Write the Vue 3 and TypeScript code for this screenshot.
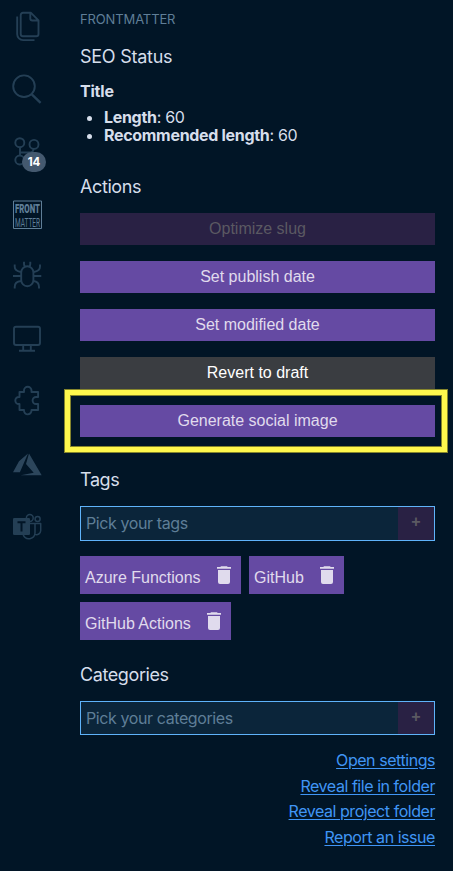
<script setup lang="ts">
import { ref } from 'vue'

interface Action {
  label: string
  kind: 'primary' | 'secondary'
  disabled?: boolean
  highlighted?: boolean
}

const actions: Action[] = [
  { label: 'Optimize slug', kind: 'primary', disabled: true },
  { label: 'Set publish date', kind: 'primary' },
  { label: 'Set modified date', kind: 'primary' },
  { label: 'Revert to draft', kind: 'secondary' },
  { label: 'Generate social image', kind: 'primary', highlighted: true },
]

const tags = ref<string[]>(['Azure Functions', 'GitHub', 'GitHub Actions'])
const links: string[] = ['Open settings', 'Reveal file in folder', 'Reveal project folder', 'Report an issue']

function removeTag(tag: string): void {
  tags.value = tags.value.filter((t) => t !== tag)
}
</script>

<template>
  <div class="workbench">
    <nav class="rail">
      <svg class="icon" viewBox="0 0 32 32">
        <path d="M20 2.800H12a2.300 2.300 0 0 0-2.300 2.300v18.800a2.300 2.300 0 0 0 2.300 2.300h13.200a2.300 2.300 0 0 0 2.300-2.300V10.300zM19.300 2.800v5.700a2 2 0 0 0 2 2h6.200M6.200 6.500v17.800a5.800 5.800 0 0 0 5.800 5.800h11.500" />
      </svg>
      <svg class="icon" viewBox="0 0 32 32">
        <circle cx="13" cy="13.200" r="10.800" />
        <path class="heavy" d="M20.800 21.300l8.800 8.600" />
      </svg>
      <div class="with-badge">
        <svg class="icon" viewBox="0 0 32 32">
          <circle cx="8.800" cy="7.700" r="4.500" />
          <circle cx="23" cy="9.400" r="4.500" />
          <circle cx="8.800" cy="25" r="4.500" />
          <path d="M9 12.500v8M9 17.500h9q4.500 0 4.500-3.500" />
        </svg>
        <span class="badge">14</span>
      </div>
      <svg class="icon brand" viewBox="0 0 32 32">
        <rect x="2.500" y="3" width="28" height="27.500" />
        <text x="4" y="14.500" class="front" textLength="25" lengthAdjust="spacingAndGlyphs">FRONT</text>
        <text x="4" y="28.500" class="matter" textLength="25" lengthAdjust="spacingAndGlyphs">MATTER</text>
      </svg>
      <svg class="icon" viewBox="0 0 32 32">
        <rect x="10.200" y="6.300" width="12.200" height="19.900" rx="6.100" />
        <path d="M13 1.800v2.200q0 1.500 1 2.500M19.300 1.800v2.200q0 1.500-1 2.500M3.700 4.500v2.300q0 4.200 6.200 5.200M29 4.500v2.300q0 4.200-6.200 5.200M2 16h8M22.500 16h7.800M10 21q-6.300.5-6.300 6v1.500M22.500 21q5.500.5 5.500 6v1.500" />
      </svg>
      <svg class="icon" viewBox="0 0 32 32">
        <rect x="3" y="3.700" width="26" height="18.300" rx="2" />
        <path d="M12.200 22v5.500M19.800 22v5.500M8 27.700h16" />
      </svg>
      <svg class="icon" viewBox="0 0 32 32">
        <path d="M8.500 7h4.500v-1.500a3.500 3.500 0 0 1 7.500 0v1.500h6.600v5h-2a3.500 3.500 0 0 0 0 7h2v6h-6.600v.6a3.500 3.500 0 0 1-7.500 0v-.6H8.500v-6H7.800a3.500 3.500 0 0 1 0-7h.7z" />
      </svg>
      <svg class="icon filled" viewBox="0 0 32 32">
        <path d="M17 5.500L8.900 24.300H2L8 13.300zM18 5.500l12.700 21.800h-21l13-2.500L15 15.900z" />
      </svg>
      <svg class="icon teams" viewBox="0 0 32 32">
        <circle cx="18.800" cy="8" r="3.400" />
        <circle cx="26.600" cy="9" r="2.500" />
        <path d="M19 13.500h5v9.300a6.100 6.100 0 0 1-11.800 2M24 13.500h5.700v7.200a4.200 4.200 0 0 1-5.700 3.700" />
        <rect class="tile" x="2" y="8" width="17" height="17" rx="1.300" />
        <path class="letter" d="M6.500 12.300h8M10.500 12.300v9.200" />
      </svg>
    </nav>

    <main class="panel">
      <header class="panel-title">FRONTMATTER</header>

      <section class="seo">
        <h3 class="seo-heading">SEO Status</h3>
        <h4>Title</h4>
        <ul>
          <li><strong>Length</strong>: 60</li>
          <li><strong>Recommended length</strong>: 60</li>
        </ul>
      </section>

      <section class="actions">
        <h3>Actions</h3>
        <div class="action-list">
          <div v-for="a in actions" :key="a.label" class="action">
            <button :class="a.kind" :disabled="a.disabled">{{ a.label }}</button>
            <span v-if="a.highlighted" class="highlight"></span>
          </div>
        </div>
      </section>

      <section class="tags">
        <h3>Tags</h3>
        <div class="picker">
          <input type="text" placeholder="Pick your tags" />
          <button disabled>+</button>
        </div>
        <div class="chips">
          <button v-for="tag in tags" :key="tag" class="chip" @click="removeTag(tag)">
            <span>{{ tag }}</span>
            <svg viewBox="0 0 14 18">
              <path d="M4 .3h6l.7.7H14v1.700H0V1h3.300zM1 4h12v12a2 2 0 0 1-2 2H3a2 2 0 0 1-2-2z" />
            </svg>
          </button>
        </div>
      </section>

      <section class="categories">
        <h3>Categories</h3>
        <div class="picker short">
          <input type="text" placeholder="Pick your categories" />
          <button disabled>+</button>
        </div>
      </section>

      <footer class="links">
        <a v-for="link in links" :key="link" href="#">{{ link }}</a>
      </footer>
    </main>
  </div>
</template>

<style>
body {
  background: #011526;
}
</style>

<style scoped>
.workbench {
  display: flex;
  box-sizing: border-box;
  width: 453px;
  height: 871px;
  overflow: hidden;
  background: #011526;
  color: #d6deeb;
  font: 16px/18px Inter, sans-serif;
}

.rail {
  display: flex;
  flex-direction: column;
  flex: none;
  gap: 30.5px;
  width: 69px;
  box-sizing: border-box;
  padding: 10px 0 0 11px;
}

.icon {
  display: block;
  flex: none;
  width: 32px;
  height: 32px;
  overflow: visible;
  fill: none;
  stroke: #243f55;
  stroke-width: 1.9;
  stroke-linejoin: round;
}

.heavy {
  stroke-width: 2.4;
}

.filled {
  fill: #2c465c;
  stroke: none;
}

.with-badge {
  position: relative;
  height: 32px;
}

.badge {
  position: absolute;
  left: 11px;
  top: 17px;
  width: 24px;
  height: 20px;
  border-radius: 10px;
  background: #44596f;
  color: #fff;
  font-size: 11.5px;
  font-weight: 700;
  line-height: 20px;
  text-align: center;
}

.brand {
  stroke: #5f7e97;
  stroke-width: 1;
}

.brand text {
  fill: #5f7e97;
  stroke: none;
  font-family: Roboto, sans-serif;
  font-size: 12px;
}

.brand .front {
  font-weight: 900;
}

.teams {
  stroke-width: 1.5;
}

.teams .tile {
  fill: #243f55;
  stroke: none;
}

.teams .letter {
  stroke: #011526;
  stroke-width: 2;
}

.panel {
  flex: none;
  width: 355px;
  margin-left: 11px;
}

.panel-title {
  height: 39px;
  line-height: 39px;
  font-size: 13px;
  letter-spacing: -0.13px;
  color: #5f7e97;
}

h3 {
  margin: 0;
  font-size: 18px;
  line-height: 24px;
  font-weight: 400;
  letter-spacing: -0.4px;
}

.seo-heading {
  letter-spacing: -0.25px;
}

.seo {
  padding-top: 6px;
}

h4 {
  margin: 12px 0 0;
  font-size: 16px;
  line-height: 20px;
  font-weight: 700;
  letter-spacing: -0.2px;
}

ul {
  margin: 7px 0 0;
  padding-left: 24px;
  font-size: 16px;
  letter-spacing: -0.31px;
}

.actions {
  padding-top: 31px;
}

.action-list {
  display: flex;
  flex-direction: column;
  gap: 16px;
  margin-top: 14px;
}

.action {
  position: relative;
}

button {
  border: 0;
  border-radius: 0;
  padding: 0;
  font: 16px/30px "Liberation Sans", Arial, sans-serif;
}

.action button {
  display: block;
  width: 100%;
  height: 32px;
}

.primary,
.chip {
  background: #654aa3;
  color: #e0dbed;
}

.primary:disabled,
.picker button {
  background: #292144;
  color: #5b5962;
}

.secondary {
  background: #3a3d41;
  color: #fff;
}

.highlight {
  position: absolute;
  inset: -15px -12px -15px -15px;
  border: 5px solid #fff84d;
  outline: 1px solid #85852c;
  box-shadow: inset 0 0 0 1px #85852c;
}

.tags {
  padding-top: 31px;
}

.picker {
  display: flex;
  box-sizing: border-box;
  height: 35px;
  margin-top: 14px;
  border: 1px solid #5fb3fa;
  background: #0b253a;
}

.picker.short {
  height: 34px;
}

.picker input {
  flex: 1;
  min-width: 0;
  border: 0;
  padding: 0 5px 1px;
  background: none;
  outline: none;
  color: #d6deeb;
  font: 16px Inter, sans-serif;
  letter-spacing: -0.4px;
}

.picker.short input {
  padding-bottom: 0;
}

.picker input::placeholder {
  color: #5f7e97;
  opacity: 1;
}

.picker button {
  width: 36px;
  padding-bottom: 3px;
  font-weight: 700;
}

.chips {
  display: flex;
  flex-wrap: wrap;
  gap: 8px;
  margin-top: 15px;
}

.chip {
  display: flex;
  align-items: center;
  height: 38px;
  padding: 0 10px 0 5px;
  gap: 16.4px;
}

.chip span {
  padding-top: 5px;
}

.chip svg {
  width: 14px;
  height: 18px;
  fill: #e0dbed;
}

.categories {
  padding-top: 23px;
}

.links {
  display: flex;
  flex-direction: column;
  align-items: flex-end;
  margin-top: 13px;
}

.links a {
  color: #4095f5;
  font-size: 16px;
  line-height: 25.7px;
  letter-spacing: -0.45px;
  text-underline-offset: 2px;
}
</style>
